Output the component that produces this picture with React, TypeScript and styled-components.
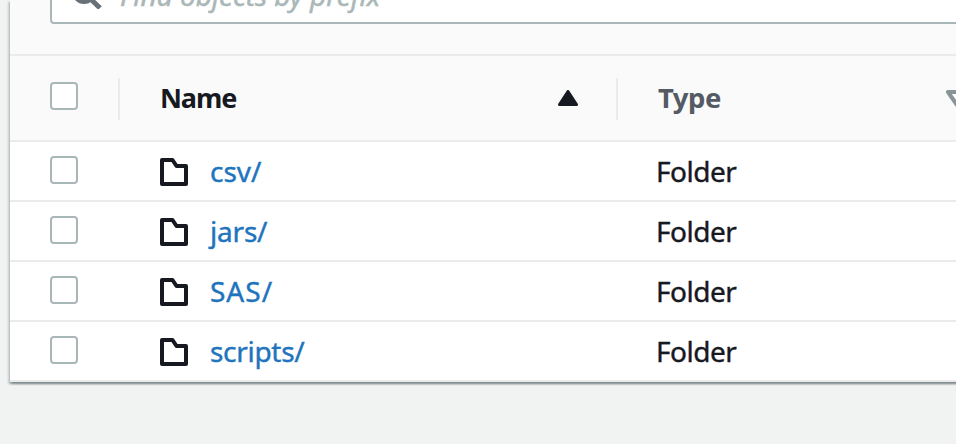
import React from 'react';
import styled, { createGlobalStyle } from 'styled-components';

const GlobalStyle = createGlobalStyle`
  *, *::before, *::after { box-sizing: border-box; }
  html, body { margin: 0; height: 100%; overflow: hidden; background: #f1f3f3; }
  body { font-family: "Noto Sans", "Open Sans", sans-serif; font-size: 28px; color: #16191f; }
`;

const Page = styled.main`
  height: 444px;
  padding-left: 10px;
  overflow: hidden;
  background: #f1f3f3;
`;

const Card = styled.section`
  width: 1000px;
  height: 382px;
  background: #fff;
  box-shadow: 0 2px 2px 0 rgba(0, 28, 36, 0.3), 2px 2px 2px 0 rgba(0, 28, 36, 0.15),
    -2px 2px 2px 0 rgba(0, 28, 36, 0.15);
`;

const SearchBar = styled.div`
  display: flow-root;
  height: 56px;
  padding-left: 40px;
  background: #fafafa;
  border-bottom: 2px solid #ebebeb;
`;

const SearchField = styled.div`
  display: flex;
  align-items: center;
  height: 64px;
  margin-top: -40px;
  padding-left: 20px;
  gap: 16px;
  background: #fff;
  border: 2px solid #aab7b8;
  border-radius: 4px;
`;

const Placeholder = styled.span`
  padding-top: 5px;
  color: #aab7b8;
  font-style: italic;
  letter-spacing: -0.05px;
  white-space: nowrap;
  -webkit-text-stroke: 0.5px currentColor;
`;

const Row = styled.div<{ $header?: boolean }>`
  display: grid;
  grid-template-columns: 108px 498px 394px;
  align-items: center;
  height: ${(p) => (p.$header ? 86 : 60)}px;
  background: ${(p) => (p.$header ? '#fafafa' : '#fff')};
  border-bottom: 2px solid #ebebeb;
`;

const CheckCell = styled.div<{ $header?: boolean }>`
  padding: 0 0 ${(p) => (p.$header ? 4 : 2)}px 40px;
`;

const Checkbox = styled.span`
  display: block;
  width: 28px;
  height: 28px;
  background: #fff;
  border: 2px solid #aab7b8;
  border-radius: 4px;
`;

const HeadCell = styled.div<{ $muted?: boolean }>`
  display: flex;
  align-items: center;
  justify-content: space-between;
  height: 42px;
  margin-top: 2px;
  padding: 0 ${(p) => (p.$muted ? 42 : 38)}px 2px 40px;
  border-left: 2px solid #ebebeb;
  color: ${(p) => (p.$muted ? '#545b64' : '#16191f')};
  font-weight: 700;
`;

const HeadText = styled.span<{ $size: number; $spacing: number }>`
  font-size: ${(p) => p.$size}px;
  line-height: 38px;
  letter-spacing: ${(p) => p.$spacing}px;
`;

const NameCell = styled.div`
  display: flex;
  align-items: center;
  gap: 22px;
  padding-left: 42px;
`;

const Link = styled.a<{ $spacing: number }>`
  color: #2074bd;
  letter-spacing: ${(p) => p.$spacing}px;
  line-height: 38px;
  -webkit-text-stroke: 0.4px currentColor;
`;

const TypeCell = styled.div`
  padding-left: 40px;
  letter-spacing: -0.5px;
  line-height: 38px;
  -webkit-text-stroke: 0.4px currentColor;
`;

const Icon = styled.svg`
  display: block;
  flex: none;
`;

const FolderSvg = styled(Icon)`
  margin-top: 2px;
`;

const SearchIcon = () => (
  <Icon width="32" height="34" viewBox="0 0 32 34" fill="none" stroke="#687078" strokeWidth="5">
    <circle cx="12" cy="17" r="9.5" />
    <path d="M18 23.5 28 33" />
  </Icon>
);

const FolderIcon = () => (
  <FolderSvg width="28" height="28" viewBox="0 0 28 28" fill="none" stroke="#16191f" strokeWidth="4" strokeLinejoin="round">
    <path d="M2 2H12.5L16.5 8H26V26H2Z" />
  </FolderSvg>
);

const SortUp = () => (
  <Icon width="20" height="16" viewBox="0 0 20 16">
    <path d="M10 1.5 18.5 14.5H1.5Z" fill="#16191f" stroke="#16191f" strokeWidth="3" strokeLinejoin="round" />
  </Icon>
);

const SortDown = () => (
  <Icon width="22" height="18" viewBox="0 0 22 18">
    <path d="M2 3H20L11 16Z" fill="#fff" stroke="#879596" strokeWidth="4" strokeLinejoin="round" />
  </Icon>
);

const folders = [
  { name: 'csv/', spacing: 0 },
  { name: 'jars/', spacing: -0.2 },
  { name: 'SAS/', spacing: 1 },
  { name: 'scripts/', spacing: -0.3 },
];

export default function App() {
  return (
    <>
      <GlobalStyle />
      <Page>
        <Card>
          <SearchBar>
            <SearchField>
              <SearchIcon />
              <Placeholder>Find objects by prefix</Placeholder>
            </SearchField>
          </SearchBar>
          <Row $header>
            <CheckCell $header><Checkbox /></CheckCell>
            <HeadCell>
              <HeadText $size={27} $spacing={-1.1}>Name</HeadText>
              <SortUp />
            </HeadCell>
            <HeadCell $muted>
              <HeadText $size={27.5} $spacing={-0.5}>Type</HeadText>
              <SortDown />
            </HeadCell>
          </Row>
          {folders.map((f) => (
            <Row key={f.name}>
              <CheckCell><Checkbox /></CheckCell>
              <NameCell>
                <FolderIcon />
                <Link $spacing={f.spacing}>{f.name}</Link>
              </NameCell>
              <TypeCell>Folder</TypeCell>
            </Row>
          ))}
        </Card>
      </Page>
    </>
  );
}
